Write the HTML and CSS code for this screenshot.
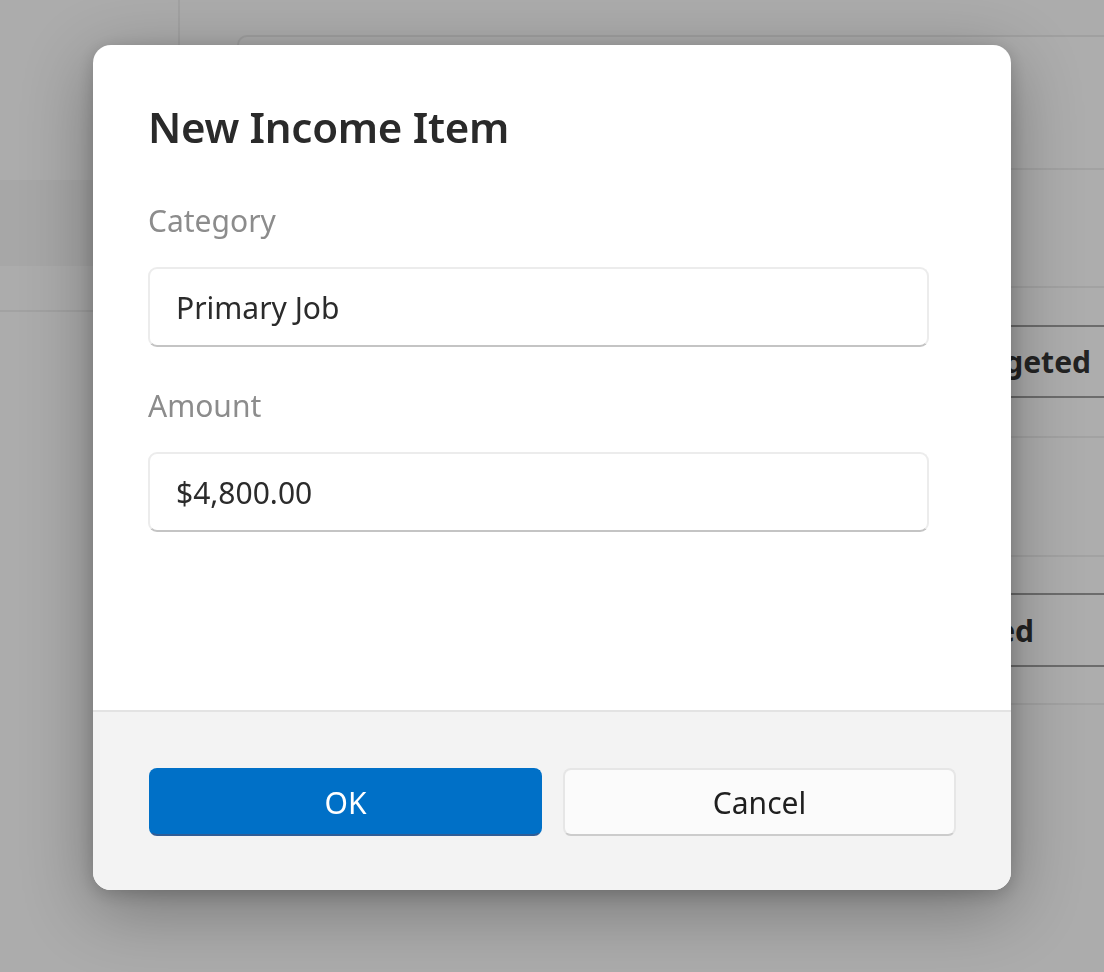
FILE: index.html
```html
<!DOCTYPE html>
<html lang="en">
<head>
<meta charset="utf-8">
<title>New Income Item</title>
<link rel="stylesheet" href="styles.css">
</head>
<body>
<div class="app">
  <aside class="nav">
    <div class="nav-top"></div>
    <div class="nav-band"></div>
    <div class="nav-item"></div>
  </aside>
  <main class="main">
    <section class="card">
      <div class="row r1"></div>
      <div class="row r2"></div>
      <div class="row r3"></div>
      <div class="row head h1"><span>Budgeted</span></div>
      <div class="row r5"></div>
      <div class="row r6"></div>
      <div class="row r7"></div>
      <div class="row head h2"><span>Received</span></div>
      <div class="row r9"></div>
    </section>
  </main>
</div>

<div class="dialog" role="dialog" aria-labelledby="dlg-title">
  <div class="dialog-body">
    <h1 id="dlg-title" class="dialog-title">New Income Item</h1>
    <label class="field-label">Category</label>
    <div class="textbox">Primary Job</div>
    <label class="field-label">Amount</label>
    <div class="textbox">$4,800.00</div>
  </div>
  <div class="dialog-footer">
    <button class="btn btn-primary">OK</button>
    <button class="btn btn-secondary">Cancel</button>
  </div>
</div>
</body>
</html>
```

FILE: styles.css
```css
html, body {
  margin: 0;
  padding: 0;
}
body {
  width: 1104px;
  height: 972px;
  overflow: hidden;
  background: #acacac;
  font-family: "Noto Sans", "Open Sans", "Liberation Sans", sans-serif;
}

/* background app (dimmed) */
.app {
  display: flex;
  height: 972px;
}
.nav {
  width: 180px;
  flex: none;
  display: flex;
  flex-direction: column;
}
.nav-top {
  height: 180px;
  border-right: 2px solid #a2a2a2;
  box-sizing: border-box;
}
.nav-band {
  height: 86px;
  background: #a7a7a7;
}
.nav-item {
  height: 44px;
  border-bottom: 2px solid #a2a2a2;
}
.main {
  flex: 1;
  padding: 35px 0 0 57px;
}
.card {
  border-top: 2px solid #a0a0a0;
  border-left: 2px solid #a0a0a0;
  border-top-left-radius: 10px;
  background: #adadad;
}
.row {
  border-bottom: 2px solid #a2a2a2;
  box-sizing: border-box;
}
.r1 { height: 133px; }
.r2 { height: 118px; }
.r3 { height: 39px; border-bottom-color: #6c6c6c; }
.head {
  display: flex;
  align-items: center;
  justify-content: flex-end;
  font-weight: 700;
  font-size: 30px;
  color: #232323;
  border-bottom-color: #6c6c6c;
}
.h1 { height: 71px; padding-right: 13px; }
.r5 { height: 40px; }
.r6 { height: 119px; }
.r7 { height: 38px; border-bottom-color: #6c6c6c; }
.h2 { height: 72px; padding-right: 70px; }
.r9 { height: 38px; }

/* dialog */
.dialog {
  position: fixed;
  left: 93px;
  top: 45px;
  width: 918px;
  height: 845px;
  background: #ffffff;
  border-radius: 18px;
  overflow: hidden;
  display: flex;
  flex-direction: column;
  box-shadow: 0 18px 70px rgba(0, 0, 0, 0.32), 0 4px 18px rgba(0, 0, 0, 0.18);
}
.dialog-body {
  flex: 1;
  padding: 50px 82px 0 55px;
  display: flex;
  flex-direction: column;
}
.dialog-title {
  margin: 0 0 41px 0;
  font-size: 42px;
  line-height: 64px;
  font-weight: 600;
  color: #2a2a2a;
  letter-spacing: -0.3px;
}
.field-label {
  display: block;
  font-size: 30px;
  line-height: 42px;
  color: #8c8c8c;
  margin-bottom: 25px;
}
.textbox {
  height: 80px;
  box-sizing: border-box;
  border: 2px solid #ececec;
  border-bottom-color: #c4c4c4;
  border-radius: 9px;
  padding: 0 26px;
  display: flex;
  align-items: center;
  font-size: 30px;
  color: #2b2b2b;
  margin-bottom: 38px;
}
.dialog-footer {
  height: 180px;
  box-sizing: border-box;
  background: #f3f3f3;
  border-top: 2px solid #e3e3e3;
  padding: 56px 55px 0 56px;
  display: flex;
  gap: 21px;
  align-items: flex-start;
}
.btn {
  flex: 1;
  height: 68px;
  border-radius: 8px;
  font-family: inherit;
  font-size: 30px;
  box-sizing: border-box;
  cursor: pointer;
}
.btn-primary {
  background: #0070c7;
  color: #ffffff;
  border: 2px solid #0070c7;
  border-bottom-color: #2f5d96;
}
.btn-secondary {
  background: #fbfbfb;
  color: #1f1f1f;
  border: 2px solid #e6e6e6;
  border-bottom-color: #cccccc;
}
```
